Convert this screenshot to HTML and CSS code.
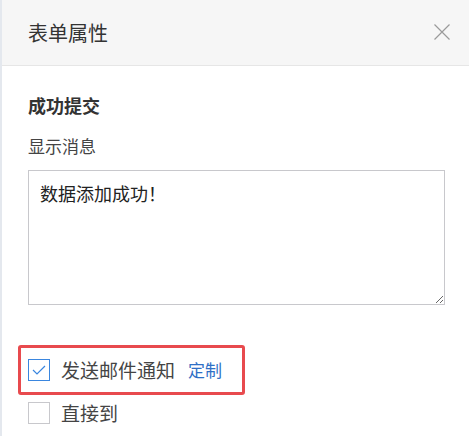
FILE: index.html
```html
<!DOCTYPE html>
<html lang="zh">
<head>
<meta charset="utf-8">
<link rel="stylesheet" href="styles.css">
</head>
<body>
<div class="panel">
  <div class="header">
    <span class="title">表单属性</span>
    <svg class="close" width="16" height="16" viewBox="0 0 16 16"><path d="M0.5 0.5 L15.5 15.5 M15.5 0.5 L0.5 15.5" stroke="#9a9a9a" stroke-width="1.2" fill="none"/></svg>
  </div>
  <div class="content">
    <div class="section-title">成功提交</div>
    <div class="label">显示消息</div>
    <textarea class="message">数据添加成功！</textarea>
    <div class="highlight">
      <label class="check-row">
        <span class="box checked"><svg width="14" height="10" viewBox="0 0 14 10"><path d="M1 5 L5 9 L13 1" stroke="#3a86df" stroke-width="1.2" fill="none"/></svg></span>
        <span class="check-text">发送邮件通知</span>
        <a class="link">定制</a>
      </label>
    </div>
    <label class="check-row plain">
      <span class="box"></span>
      <span class="check-text">直接到</span>
    </label>
  </div>
</div>
</body>
</html>
```
FILE: styles.css
```css
html, body {
  margin: 0;
  padding: 0;
  background: #fff;
}
body {
  font-family: "Noto Sans CJK SC", "Noto Sans", sans-serif;
  color: #333;
}
.panel {
  width: 469px;
  height: 436px;
  box-sizing: border-box;
  border-left: 2px solid #e4e8ee;
  overflow: hidden;
}
.header {
  height: 66px;
  box-sizing: border-box;
  background: #f6f6f6;
  border-bottom: 1px solid #e6e6e6;
  display: flex;
  align-items: center;
  justify-content: space-between;
  padding: 0 19px 0 26px;
}
.title {
  font-size: 20px;
  color: #333;
  line-height: 1;
}
.close {
  display: block;
  margin-top: -2px;
}
.content {
  padding: 26px 0 0 26px;
}
.section-title {
  font-size: 18px;
  font-weight: bold;
  color: #333;
  line-height: 26px;
}
.label {
  font-size: 17px;
  color: #444;
  line-height: 24px;
  margin-top: 16px;
}
.message {
  display: block;
  box-sizing: border-box;
  width: 417px;
  height: 135px;
  margin-top: 12px;
  border: 1px solid #c8c8cc;
  border-radius: 0;
  padding: 10px 11px;
  font-family: "Noto Sans CJK SC", sans-serif;
  font-size: 18px;
  line-height: 24px;
  color: #222;
  resize: vertical;
  outline: none;
}
.highlight {
  margin-top: 40px;
  margin-left: -10px;
  width: 227px;
  height: 50px;
  box-sizing: border-box;
  border: 3.5px solid #e84a4e;
  border-radius: 3px;
  display: flex;
  align-items: center;
  padding-left: 7px;
}
.check-row {
  display: flex;
  align-items: center;
}
.box {
  width: 22px;
  height: 22px;
  box-sizing: border-box;
  border: 1px solid #c8c8cc;
  display: flex;
  align-items: center;
  justify-content: center;
}
.box.checked {
  border-color: #3a86df;
}
.check-text {
  font-size: 19px;
  color: #444;
  margin-left: 11px;
  line-height: 24px;
}
.link {
  font-size: 17px;
  color: #2f6fc6;
  margin-left: 13px;
  line-height: 24px;
}
.plain {
  margin-top: 6px;
}
```
